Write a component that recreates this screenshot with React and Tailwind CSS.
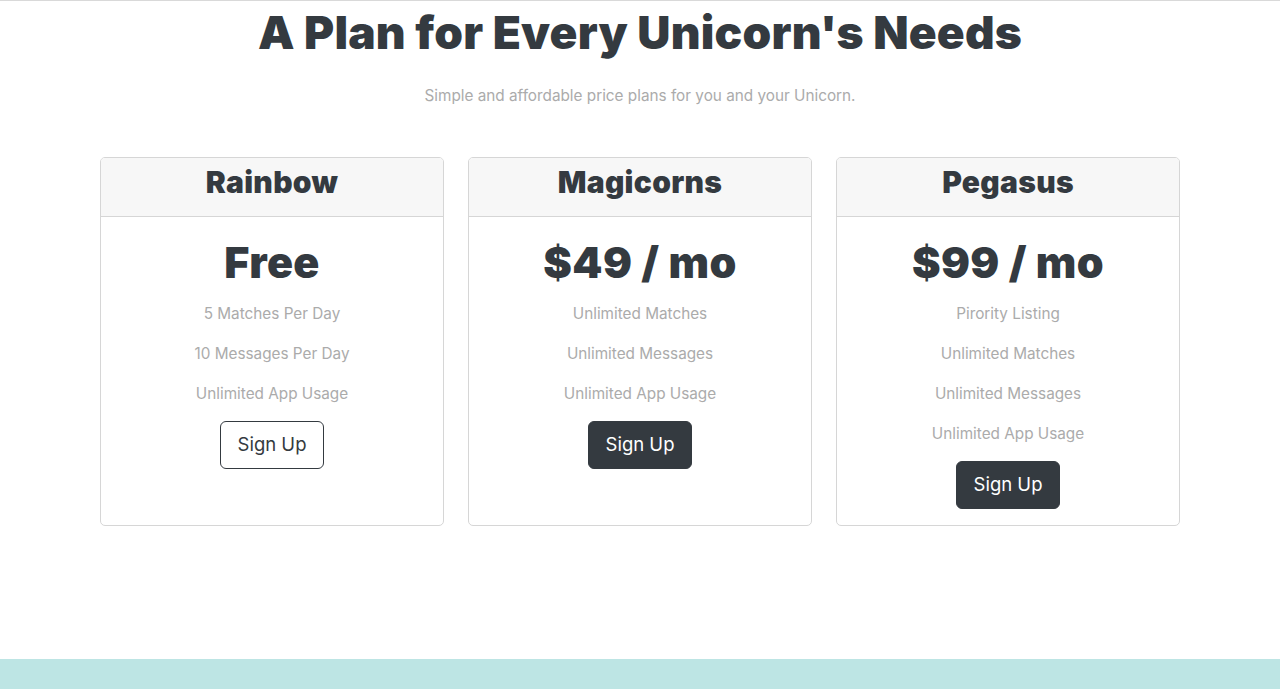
import React from "react";

const plans = [
  {
    name: "Rainbow",
    price: "Free",
    features: ["5 Matches Per Day", "10 Messages Per Day", "Unlimited App Usage"],
    outline: true,
  },
  {
    name: "Magicorns",
    price: "$49 / mo",
    features: ["Unlimited Matches", "Unlimited Messages", "Unlimited App Usage"],
  },
  {
    name: "Pegasus",
    price: "$99 / mo",
    features: ["Pirority Listing", "Unlimited Matches", "Unlimited Messages", "Unlimited App Usage"],
  },
];

const heading = { fontFamily: "Inter, 'DejaVu Sans', sans-serif" };

const PlanCard = ({ plan }) => (
  <div className="flex flex-col rounded-[5px] border border-[#d6d6d6] bg-white overflow-hidden">
    {/* Header */}
    <div className="h-[59px] bg-[#f7f7f7] border-b border-[#d6d6d6] flex justify-center pt-[7px]">
      <h3 className="text-[30px] leading-[34px] font-black text-[#343a40] tracking-[0.3px]" style={heading}>
        {plan.name}
      </h3>
    </div>

    {/* Body */}
    <div className="flex flex-col items-center pt-[18px] pb-[16px]">
      <h1 className="text-[43px] leading-[54px] font-black text-[#343a40] tracking-[0.4px]" style={heading}>
        {plan.price}
      </h1>
      <ul className="mt-[13px] flex flex-col items-center">
        {plan.features.map((f, i) => (
          <li key={i} className="h-[40px] leading-[24px] text-[15.3px] text-[#ababab]">
            {f}
          </li>
        ))}
      </ul>
      <button
        className={
          plan.outline
            ? "mt-[-1px] w-[104px] h-[48px] rounded-[6px] border border-[#343a40] text-[#343a40] text-[18.5px] bg-white"
            : "mt-[-1px] w-[104px] h-[48px] rounded-[6px] border border-[#343a40] bg-[#343a40] text-white text-[18.5px]"
        }
      >
        Sign Up
      </button>
    </div>
  </div>
);

export default function App() {
  return (
    <div className="w-full min-h-[689px] bg-white flex flex-col" style={{ fontFamily: "Inter, 'Liberation Sans', sans-serif" }}>
      <div className="border-t border-[#d9d9d9]" />

      <section className="flex flex-col items-center">
        <h1 className="mt-[3px] text-[46px] leading-[56px] font-black text-[#343a40] tracking-[0.2px]" style={heading}>
          A Plan for Every Unicorn's Needs
        </h1>
        <p className="mt-[24px] text-[15.3px] leading-[24px] text-[#ababab]">
          Simple and affordable price plans for you and your Unicorn.
        </p>

        <div className="mt-[49px] w-[1080px] grid grid-cols-3 gap-[24px]">
          {plans.map((p) => (
            <PlanCard key={p.name} plan={p} />
          ))}
        </div>
      </section>

      <div className="flex-1" />
      <div className="h-[30px] bg-[#bde5e4]" />
    </div>
  );
}
